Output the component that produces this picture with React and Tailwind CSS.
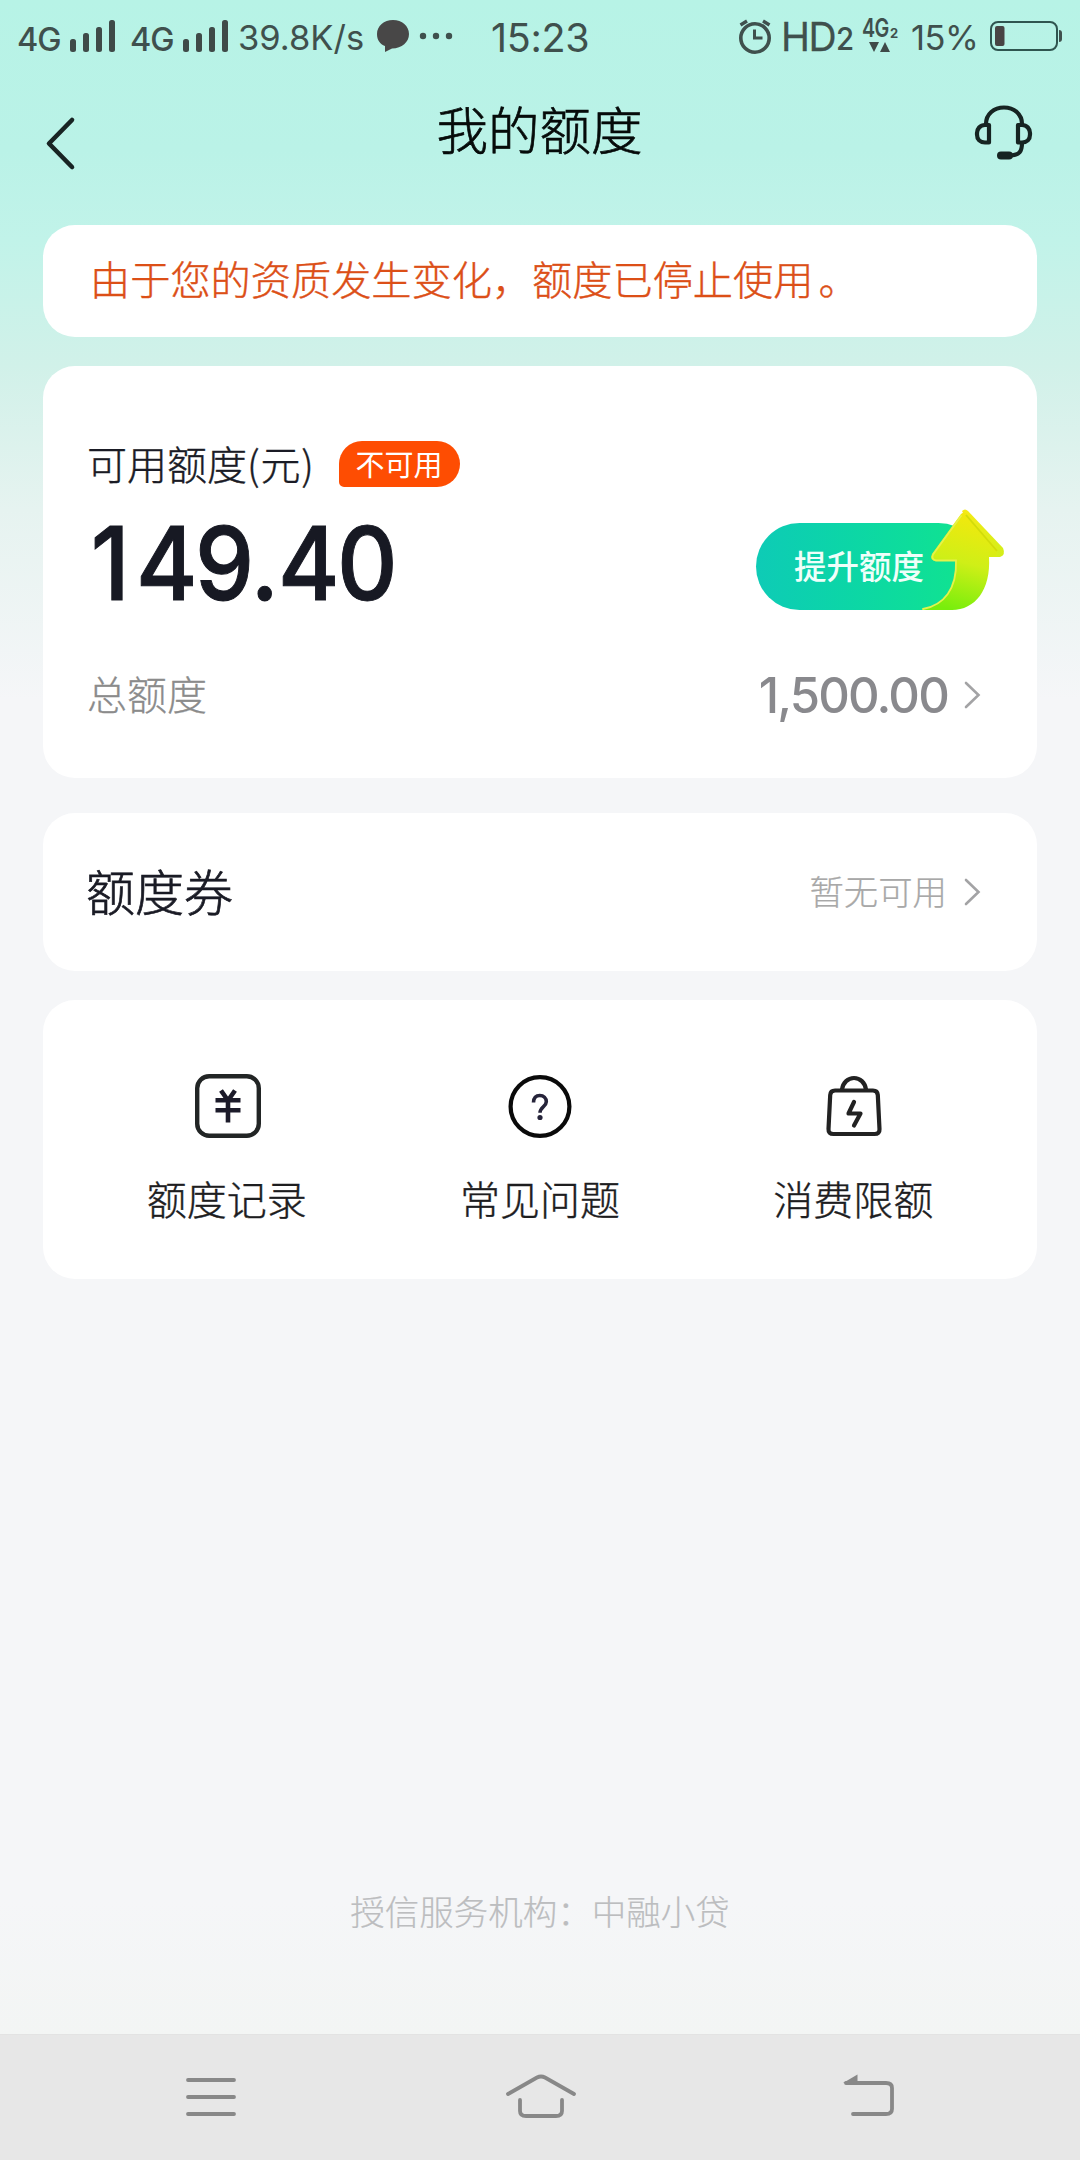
import React from "react";

const SignalBars = () => (
  <svg className="w-[46px] h-[34px] shrink-0" viewBox="0 0 46 34" fill="#3f4a48">
    <rect x="0" y="20" width="6" height="13" rx="2.5" />
    <rect x="13" y="14" width="6" height="19" rx="2.5" />
    <rect x="26" y="8" width="6" height="25" rx="2.5" />
    <rect x="39" y="1" width="6" height="32" rx="2.5" />
  </svg>
);

const StatusBar = () => (
  <div className="flex h-[76px] text-[#3f504d] font-['Inter',sans-serif] whitespace-nowrap">
    <div className="flex w-[116px] pl-[17px] pt-[19px]">
      <span className="w-[53px] pt-[4px] text-[32.500px] leading-[34px] font-medium tracking-[-1px]">4G</span>
      <SignalBars />
    </div>
    <div className="flex w-[122px] pl-[14px] pt-[19px]">
      <span className="w-[53px] pt-[4px] text-[32.500px] leading-[34px] font-medium tracking-[-1px]">4G</span>
      <SignalBars />
    </div>
    <span className="w-[139px] pt-[17px] text-[34.500px] leading-[42px]">39.8K/s</span>
    <svg className="w-[114px] h-[34px] mt-[19px]" viewBox="0 0 114 34">
      <path d="M16 1C7 1 0 7 0 15c0 6 3 10 8 12v6l7-3.500c10 0 17-6.500 17-14.500S25 1 16 1z" fill="#484747" />
      <circle cx="46" cy="17" r="3.200" fill="#3f504d" />
      <circle cx="59" cy="17" r="3.200" fill="#3f504d" />
      <circle cx="72" cy="17" r="3.200" fill="#3f504d" />
    </svg>
    <span className="w-[248px] pt-[17px] text-[39.500px] leading-[42px] tracking-[-0.300px]">15:23</span>
    <svg className="w-[42px] h-[36px] mt-[19px]" viewBox="0 0 42 36" fill="none" stroke="#3f504d">
      <circle cx="16" cy="19" r="14.200" strokeWidth="3.600" />
      <path d="M15.500 10.500V19h8" strokeWidth="3" />
      <path d="M1.500 6L8 2M24 2l6.500 4" strokeWidth="3.400" />
    </svg>
    <div className="flex w-[81px]">
      <span className="w-[55px] pt-[16px] text-[39px] leading-[42px] tracking-[-1.500px] [-webkit-text-stroke:0.3px_currentColor]">HD</span>
      <span className="pt-[20px] text-[31px] leading-[38px] font-medium origin-left scale-x-[.95]">2</span>
    </div>
    <div className="w-[49px] pt-[15px]">
      <div className="flex h-[24px] font-semibold">
        <span className="w-[28px] text-[26px] leading-[26px] tracking-[-1px] origin-left scale-x-[.76]">4G</span>
        <span className="text-[13px] leading-[36px] font-bold">2</span>
      </div>
      <svg className="w-[32px] h-[12px] mt-[2px]" viewBox="0 0 32 12" fill="#3f4a48">
        <path d="M7 1h10l-5 10zM18 11h10L23 1z" />
      </svg>
    </div>
    <span className="w-[79px] pt-[17px] text-[34.500px] leading-[42px] tracking-[-0.500px]">15%</span>
    <svg className="w-[74px] h-[32px] mt-[20px]" viewBox="0 0 74 32">
      <rect x="1" y="2" width="66" height="28" rx="7" fill="none" stroke="#2f5550" strokeWidth="2" />
      <rect x="5" y="6" width="9.500" height="20" rx="2" fill="#484444" />
      <path d="M69 10c2 0 3 1 3 3v6c0 2-1 3-3 3z" fill="#3f504d" />
    </svg>
  </div>
);

const Header = () => (
  <div className="flex justify-between h-[149px] pl-[45px] pr-[46px]">
    <svg className="w-[60px] h-[56px] mt-[39px]" viewBox="0 0 60 56" fill="none" stroke="#182423" strokeWidth="4.600" strokeLinecap="round" strokeLinejoin="round">
      <path d="M27 5L4 28.500 27 52" />
    </svg>
    <h1 className="pt-[16px] text-[51.500px] leading-[72px] font-light text-[#060b0a] [-webkit-text-stroke:0.7px_currentColor]">我的额度</h1>
    <svg className="w-[60px] h-[60px] mt-[27px]" viewBox="0 0 60 60" fill="none" stroke="#162422" strokeWidth="4.200" strokeLinejoin="round">
      <path d="M12 23v-2C12 11 20 4.500 30 4.500S48 11 48 21v2" />
      <path d="M15 22h-4c-5 0-8 4-8 8v1.500c0 5 3 8 8 8h4zM44 22h4c5 0 8 4 8 8v1.500c0 5-3 8-8 8h-4z" />
      <path d="M48 40c0 9-3 12-11 12.500" />
      <path d="M27 52.500h8" strokeWidth="8" strokeLinecap="round" />
    </svg>
  </div>
);

const Chevron = () => (
  <svg className="w-[18px] h-[30px]" viewBox="0 0 18 30" fill="none" stroke="#a3a3a5" strokeWidth="2.600" strokeLinecap="round">
    <path d="M2 3l12.500 12L2 27" />
  </svg>
);

const RaiseButton = () => (
  <button className="relative block w-[226px] h-[87px] rounded-full bg-linear-to-r from-[#0ecbb6] to-[#12e58c]">
    <span className="block pl-[38px] pb-[3px] text-left text-[32.500px] leading-[48px] font-medium text-[#effffa]">提升额度</span>
    <svg className="absolute left-[160px] top-[-18px] w-[96px] h-[106px]" viewBox="0 0 96 106">
      <defs>
        <linearGradient id="arrow" x1="0.600" y1="0" x2="0.400" y2="1">
          <stop offset="0" stopColor="#f3e80d" />
          <stop offset="0.500" stopColor="#cfef17" />
          <stop offset="1" stopColor="#78ee0c" />
        </linearGradient>
        <linearGradient id="side" x1="0" y1="0" x2="1" y2="1">
          <stop offset="0" stopColor="#f6ea16" />
          <stop offset="1" stopColor="#d3ee1a" />
        </linearGradient>
      </defs>
      <path d="M46 6q3-3 6 0l35 37q3 7-3 9H70z" fill="url(#side)" />
      <path d="M73 52c2 33-14 53-37 53H6C28 101 40 84 40 56H20q-7-1-4-7L45 9q3-3 6 0l29 37q2 5-3 6z" fill="url(#arrow)" />
      <path d="M50 10l31 36" fill="none" stroke="#d2dc0a" strokeWidth="1.800" />
      <path d="M7 104C28 100 41 84 40 55.500H20q-5-1-3-6L45 11" fill="none" stroke="#e6f24a" strokeWidth="1.800" strokeLinecap="round" />
    </svg>
  </button>
);

const YenIcon = () => (
  <svg className="w-[68px] h-[68px] ml-[2px]" viewBox="0 0 68 68" fill="none" stroke="#222525" strokeWidth="4.400">
    <rect x="3.200" y="3.200" width="61.600" height="59.600" rx="12" />
    <path d="M27 17.500l7 10 7-10M34 26v23.500M21.500 27.200h25M21.500 37.200h25" stroke="#1c1b2a" strokeWidth="4.600" />
  </svg>
);

const QuestionIcon = () => (
  <svg className="w-[68px] h-[68px] ml-px" viewBox="0 0 68 68" fill="none" stroke="#0a0a0a" strokeWidth="4.200">
    <circle cx="34" cy="33.500" r="29.400" />
    <path d="M27.500 29.500c0-4.500 2.500-7 6.300-7s6.500 2.500 6.500 6.300c0 4.500-6.300 5.700-6.300 11" stroke="#26243a" strokeWidth="3.600" />
    <circle cx="34" cy="44.500" r="2.600" fill="#26243a" stroke="none" />
  </svg>
);

const BagIcon = () => (
  <svg className="w-[68px] h-[68px] ml-px" viewBox="0 0 68 68" fill="none" stroke="#222" strokeWidth="4.200" strokeLinejoin="round">
    <path d="M22 16.500c1-7 6-11.500 12-11.500S45 9.500 46 16.500" />
    <path d="M15 17.500h38q4.500 0 4.800 4.500l1.700 34q.3 5-5 5h-41q-5.300 0-5-5l1.700-34Q10.500 17.500 15 17.500z" />
    <path d="M34 29l-5.500 11.500h12L34 52.500" strokeLinecap="round" />
  </svg>
);

const actions = [
  { label: "额度记录", Icon: YenIcon },
  { label: "常见问题", Icon: QuestionIcon },
  { label: "消费限额", Icon: BagIcon },
];

const NavBar = () => (
  <div className="flex h-[126px] bg-[#e7e7e7] border-t border-[#e3e3e3]">
    <svg className="w-[60px] h-[50px] mt-[37px] ml-[181px]" viewBox="0 0 60 50" stroke="#888" strokeWidth="3.800" strokeLinecap="round">
      <path d="M7 8h46M7 25h46M7 42h46" />
    </svg>
    <svg className="w-[80px] h-[50px] mt-[37px] ml-[260px]" viewBox="0 0 80 50" fill="none" stroke="#888" strokeWidth="3.800" strokeLinecap="round">
      <path d="M7 22L36 5.500q4-2 8 0L73 22" />
      <path d="M19 28v11q0 5 6 5h30q6 0 6-5V28" />
    </svg>
    <svg className="w-[60px] h-[50px] mt-[37px] ml-[257px]" viewBox="0 0 60 50" fill="none" stroke="#888" strokeWidth="3.800" strokeLinecap="round">
      <path d="M8 11h40q6 0 6 5v21q0 5-6 5H15" />
      <path d="M5 11L19.500 2.500V12z" fill="#888" stroke="none" />
    </svg>
  </div>
);

export default function App() {
  return (
    <div className="flex flex-col w-[1080px] h-[2160px] overflow-hidden bg-linear-[180deg,#b7f3e6_0px,#baf2e7_150px,#c1f3e9_240px,#d1f1e9_366px,#e6f3f0_510px,#f5f6f8_700px,#f5f6f8_1900px,#f3f5f4_2034px] font-['Noto_Sans_CJK_SC',sans-serif]">
      <StatusBar />
      <Header />

      <div className="flex flex-col flex-1 px-[43px]">
        {/* Notice */}
        <div className="h-[112px] rounded-[32px] bg-white pl-[47px] pt-[24px] text-[40.200px] leading-[58px] font-light text-[#dc4f17] whitespace-nowrap [-webkit-text-stroke:0.4px_currentColor]">
          由于您的资质发生变化，额度已停止使用<span className="ml-[5px]">。</span>
        </div>

        {/* Available credit */}
        <div className="h-[412px] mt-[29px] rounded-[32px] bg-white pl-[44px]">
          <div className="flex items-center pt-[68px] h-[127px]">
            <span className="mb-px text-[40px] leading-[58px] font-light text-[#1a1b25] [-webkit-text-stroke:0.4px_currentColor]">
              可用额度<span className="tracking-[0.800px]">(元)</span>
            </span>
            <span className="ml-[24px] w-[121px] h-[46px] rounded-[23px] rounded-bl-[5px] bg-[#fe4d02] text-center text-[29px] leading-[45px] text-white">不可用</span>
          </div>
          <div className="flex h-[153px] pt-[30px]">
            <span className="w-[669px] pl-[4px] text-[102px] leading-[80px] font-medium tracking-[-3px] origin-left scale-x-[.92] font-['Inter',sans-serif] text-[#171923] [-webkit-text-stroke:1px_currentColor]">
              <span className="tracking-[7px]">1</span>4<span className="tracking-[-1px]">9.</span>40
            </span>
            <RaiseButton />
          </div>
          <div className="flex items-center justify-between h-[98px] pr-[55px]">
            <span className="mb-[4px] text-[40px] leading-[58px] font-light text-[#8b8b8b] [-webkit-text-stroke:0.3px_currentColor]">总额度</span>
            <div className="flex items-center gap-[16px]">
              <span className="pt-[2px] text-[49px] leading-[58px] font-medium tracking-[-1.800px] font-['Inter',sans-serif] text-[#89898d]">1,500.00</span>
              <Chevron />
            </div>
          </div>
        </div>

        {/* Coupons */}
        <div className="flex items-center justify-between h-[158px] mt-[35px] rounded-[32px] bg-white pl-[43px] pr-[55px]">
          <span className="mb-[5px] text-[49px] leading-[70px] font-light text-[#1a1b25] [-webkit-text-stroke:0.7px_currentColor]">额度券</span>
          <div className="flex items-center gap-[17px]">
            <span className="mb-[4px] text-[34.400px] leading-[50px] font-light text-[#a8a8a8] [-webkit-text-stroke:0.2px_currentColor]">暂无可用</span>
            <Chevron />
          </div>
        </div>

        {/* Shortcuts */}
        <div className="grid grid-cols-3 h-[279px] mt-[29px] px-[27px] pt-[73px] rounded-[32px] bg-white">
          {actions.map(({ label, Icon }) => (
            <div key={label} className="flex flex-col items-center">
              <Icon />
              <span className="mt-[28px] text-[40px] leading-[58px] font-light text-[#1d1d1f] [-webkit-text-stroke:0.4px_currentColor]">{label}</span>
            </div>
          ))}
        </div>

        <p className="mt-auto mb-[99px] text-center text-[34.500px] leading-[50px] font-light text-[#bcbdbf] [-webkit-text-stroke:0.2px_currentColor]">
          授信服务机构：中融小贷
        </p>
      </div>

      <NavBar />
    </div>
  );
}
